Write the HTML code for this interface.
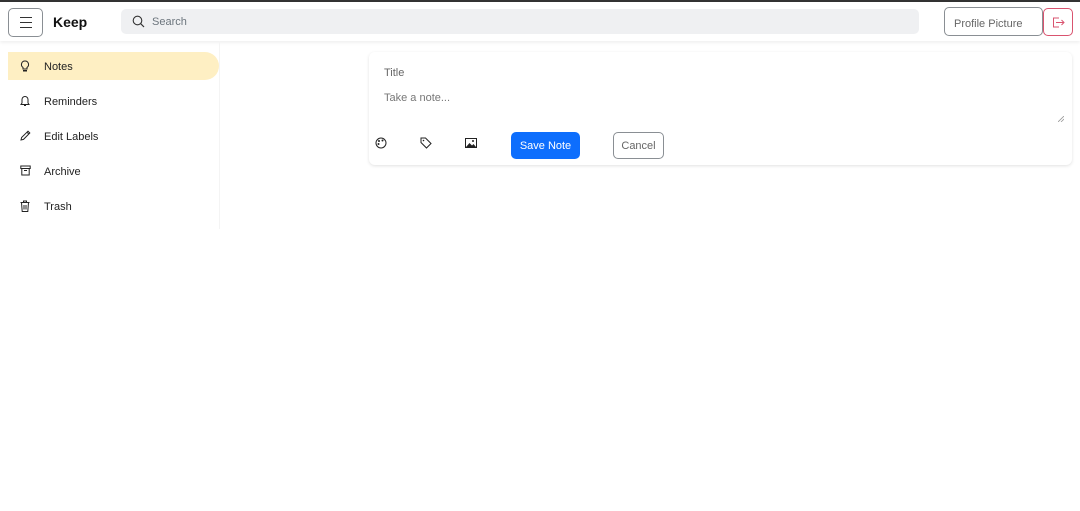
<!DOCTYPE html>
<html><head><style>
*{box-sizing:border-box;margin:0;padding:0}
body{width:1080px;height:511px;background:#fff;font-family:"Liberation Sans",sans-serif;color:#212529;position:relative;overflow:hidden}
.top{position:absolute;left:0;top:0;width:1080px;height:2px;background:#333}
.hdr{position:absolute;left:0;top:2px;width:1080px;height:39px;background:#fff;box-shadow:0 2px 3px rgba(0,0,0,.06)}
.menu{position:absolute;left:8px;top:6px;width:35px;height:29px;border:1px solid #8a8f94;border-radius:5px}
.menu i{position:absolute;left:11px;width:12px;height:1px;background:#333}
.logo{position:absolute;left:53px;top:12px;font-size:14px;font-weight:bold;color:#111}
.search{position:absolute;left:121px;top:7px;width:798px;height:25px;background:#eff0f2;border-radius:5px}
.search span{position:absolute;left:31px;top:7px;font-size:11px;color:#6c757d}
.prof{position:absolute;left:944px;top:5px;width:99px;height:29px;border:1px solid #8a8f94;border-radius:5px;font-size:11px;color:#666;padding:10px 0 0 9px;white-space:nowrap}
.out{position:absolute;left:1043px;top:6px;width:30px;height:28px;border:1px solid #d9536f;border-radius:5px}
.side{position:absolute;left:0;top:41px;width:220px;height:188px;border-right:1px solid #f4f4f4}
.item{position:absolute;left:8px;width:211px;height:28px;font-size:11px;color:#222}
.item span{position:absolute;left:36px;top:9px}
.item svg{position:absolute;left:12px;top:8px}
.act{background:#feefc3;border-radius:0 14px 14px 0}
.card{position:absolute;left:369px;top:52px;width:703px;height:113px;border-radius:6px;box-shadow:0 1px 3px rgba(0,0,0,.12)}
.t{position:absolute;left:15px;top:15px;font-size:11px;color:#666}
.n{position:absolute;left:15px;top:40px;font-size:11px;color:#777}
.save{position:absolute;left:142px;top:80px;width:69px;height:27px;background:#0d6efd;color:#fff;border-radius:5px;font-size:11px;text-align:center;line-height:28px}
.cancel{position:absolute;left:244px;top:80px;width:51px;height:27px;border:1px solid #8a8f94;color:#666;border-radius:5px;font-size:11px;text-align:center;line-height:27px}
</style></head><body>
<div class="top"></div>
<div class="hdr">
<div class="menu"><i style="top:8px"></i><i style="top:13px"></i><i style="top:18px"></i></div>
<div class="logo">Keep</div>
<div class="search"><svg style="position:absolute;left:11px;top:6px" width="13" height="13" viewBox="0 0 13 13"><circle cx="5.5" cy="5.5" r="4.3" fill="none" stroke="#333" stroke-width="1.1"/><path d="M8.6 8.6L12 12" stroke="#333" stroke-width="1.2"/></svg><span>Search</span></div>
<div class="prof">Profile Picture</div>
<div class="out"><svg style="position:absolute;left:8px;top:8px" width="13" height="11" viewBox="0 0 13 11"><path d="M7 1H1.5v9H7M4 5.5h8M9.5 3l2.5 2.5L9.5 8" fill="none" stroke="#d9536f" stroke-width="1"/></svg></div>
</div>
<div class="side">
<div class="item act" style="top:11px"><svg width="10" height="12" viewBox="0 0 10 12"><path d="M5 1a3.5 3.5 0 0 0-2 6.4V9h4V7.4A3.5 3.5 0 0 0 5 1z" fill="none" stroke="#222"/><rect x="3" y="10" width="4" height="1.5" fill="#222"/></svg><span>Notes</span></div>
<div class="item" style="top:46px"><svg width="10" height="12" viewBox="0 0 10 12"><path d="M5 1.5a3 3 0 0 0-3 3V8L1 9.5h8L8 8V4.5a3 3 0 0 0-3-3zM4 10.5h2" fill="none" stroke="#222"/></svg><span>Reminders</span></div>
<div class="item" style="top:81px"><svg width="11" height="11" viewBox="0 0 11 11"><path d="M1 10l.6-2.5L8 1.2l1.8 1.8L3.5 9.4zM7 2.2l1.8 1.8" fill="none" stroke="#222"/></svg><span>Edit Labels</span></div>
<div class="item" style="top:116px"><svg width="11" height="11" viewBox="0 0 11 11"><path d="M.8 1h9.4v2.5H.8zM1.8 3.5V10h7.4V3.5M4 5.5h3" fill="none" stroke="#222"/></svg><span>Archive</span></div>
<div class="item" style="top:151px"><svg width="10" height="12" viewBox="0 0 10 12"><path d="M.5 2.5h9M3.5 2.5V1h3v1.5M1.5 2.5l.7 9h5.6l.7-9M4 5v4.5M6 5v4.5" fill="none" stroke="#222"/></svg><span>Trash</span></div>
</div>
<div class="card">
<div class="t">Title</div>
<div class="n">Take a note...</div>
<svg style="position:absolute;left:1058px;top:116px;margin-left:-369px;margin-top:-52px" width="6" height="6" viewBox="0 0 6 6"><path d="M0 6L6 0M3 6L6 3" stroke="#999" stroke-width=".8"/></svg>
<svg style="position:absolute;left:6px;top:85px" width="12" height="12" viewBox="0 0 12 12"><circle cx="6" cy="6" r="5" fill="none" stroke="#222"/><circle cx="4" cy="4" r="1" fill="#222"/><circle cx="7.5" cy="3.5" r="1" fill="#222"/><circle cx="3.5" cy="7" r="1" fill="#222"/></svg>
<svg style="position:absolute;left:51px;top:85px" width="12" height="12" viewBox="0 0 12 12"><path d="M1 1h4.5L11 6.5 6.5 11 1 5.5z" fill="none" stroke="#222"/><circle cx="3.5" cy="3.5" r=".8" fill="#222"/></svg>
<svg style="position:absolute;left:96px;top:86px" width="12" height="10" viewBox="0 0 12 10"><rect x=".5" y=".5" width="11" height="9" fill="none" stroke="#222"/><path d="M1 9l3.5-4 2.5 2.5 1.5-1.5L11 9z" fill="#222"/><circle cx="8" cy="3" r="1" fill="#222"/></svg>
<div class="save">Save Note</div>
<div class="cancel">Cancel</div>
</div>
</body></html>
